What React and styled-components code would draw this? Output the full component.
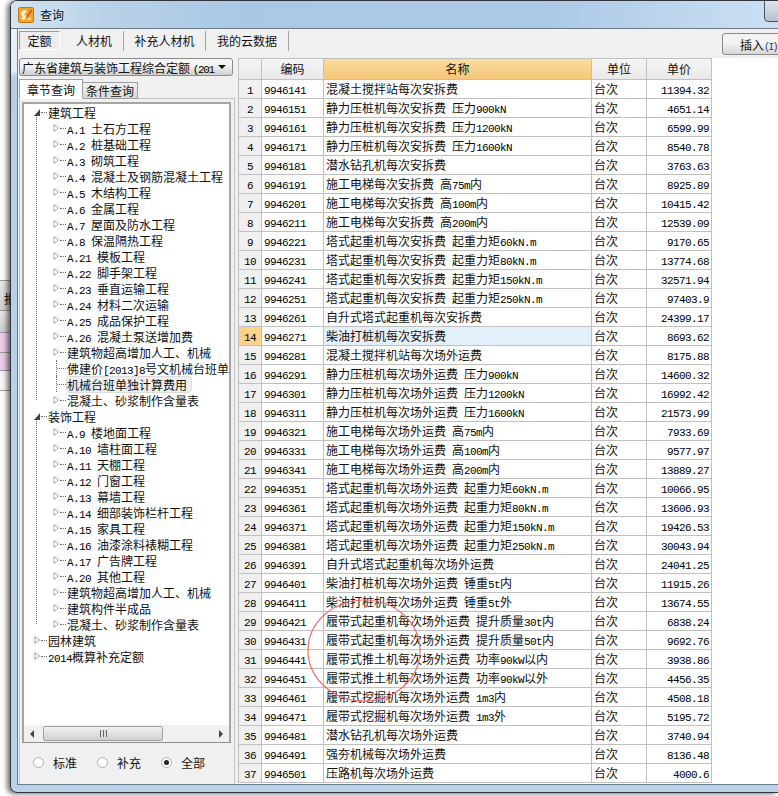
import React from 'react'
import styled, { createGlobalStyle } from 'styled-components'

const GlobalStyle = createGlobalStyle`
html, body {
  margin:0;
  padding:0;
  background:#fff;
}
body {
  font-family:"Noto Sans CJK SC","Liberation Sans",sans-serif;
  font-size:12px;
  color:#111;
}
`

const Page = styled.div`
display:flex;
align-items:flex-start;
width:778px;
height:796px;
overflow:hidden;
background:#fff;
`
const Backdrop = styled.div`
width:10px;
flex-shrink:0;
padding-top:280px;
overflow:hidden;
`
const BackdropRow = styled.div`
height:${p => p.$h}px;
box-sizing:border-box;
padding-left:4px;
background:${p => p.$bg};
border-top:${p => p.$first ? '1px solid #9a9a9a' : 'none'};
border-bottom:1px solid #9a9a9a;
font-size:12px;
line-height:${p => p.$h + 4}px;
white-space:nowrap;
`
const Window = styled.div`
flex:1;
min-width:0;
height:793px;
box-sizing:border-box;
display:flex;
flex-direction:column;
border:1px solid #30363c;
border-right:none;
border-radius:7px 0 0 7px;
background:linear-gradient(#eef4f9 0,#e3edf6 70px,#b4d0e8 76px,#b9d4ea);
box-shadow:-3px 1px 5px rgba(0,0,0,.55);
position:relative;
overflow:hidden;
`
const TitleBar = styled.div`
height:28px;
flex-shrink:0;
display:flex;
align-items:center;
padding-left:7px;
gap:6px;
box-sizing:border-box;
background:linear-gradient(90deg,#d3e3f1,#b9d2e8 12%,#a9c8e4 30%,#abc9e5 70%,#cbe0f3);
border-bottom:1px solid #6f7b86;
`
const TitleText = styled.span`
font-size:12px;
color:#05121f;
text-shadow:0 0 4px #e8f3fc;
`
const CloseStub = styled.div`
position:absolute;
top:-2px;
right:-12px;
width:24px;
height:21px;
border:1px solid #4a5560;
border-radius:0 0 4px 4px;
background:linear-gradient(#dfe7ee,#b4c2cf);
`
const WindowBody = styled.div`
flex:1;
min-height:0;
display:flex;
flex-direction:column;
margin-left:6px;
margin-bottom:7px;
border-left:1px solid #6f7b86;
border-bottom:1px solid #6f7b86;
background:#f0f0f0;
`
const Toolbar = styled.div`
height:29px;
flex-shrink:0;
display:flex;
align-items:flex-start;
padding-top:2px;
box-sizing:border-box;
`
const TabStrip = styled.div`
display:flex;
height:20px;
margin-left:1px;
`
const TopTab = styled.div`
display:flex;
align-items:center;
justify-content:center;
width:${p => p.$w}px;
padding-bottom:2px;
box-sizing:border-box;
border-right:1px solid #a6a6a6;
`
const ActiveTopTab = styled.div`
width:41px;
height:19px;
margin-right:5px;
padding-bottom:1px;
box-sizing:border-box;
display:flex;
align-items:center;
justify-content:center;
border:1px solid #9c9c9c;
border-right-color:#fff;
border-bottom-color:#fff;
background:repeating-conic-gradient(#f6f6f6 0 25%,#e4e4e4 0 50%) 0 0/2px 2px;
`
const InsertButton = styled.button`
margin-left:auto;
margin-right:-12px;
margin-top:2px;
width:68px;
height:22px;
padding:0 0 0 17px;
border:1px solid #8a8a8a;
border-radius:3px;
background:linear-gradient(#f3f3f3 45%,#d6d6d6);
font:12px "Noto Sans CJK SC",sans-serif;
color:#111;
text-align:left;
white-space:nowrap;
`
const Accel = styled.span`
color:#123f8f;
font-family:"Liberation Mono",monospace;
font-size:10px;
letter-spacing:-1.8px;
`
const Main = styled.div`
flex:1;
min-height:0;
display:flex;
`
const LeftPane = styled.div`
width:217px;
flex-shrink:0;
margin-right:3px;
display:flex;
flex-direction:column;
padding-left:1px;
box-sizing:border-box;
`
const Combo = styled.div`
width:214px;
height:18px;
box-sizing:border-box;
flex-shrink:0;
display:flex;
align-items:center;
justify-content:space-between;
padding:0 6px 0 2px;
border:1px solid #8c8c8c;
border-radius:3px;
background:linear-gradient(#f4f4f4 40%,#cfcfcf);
white-space:nowrap;
overflow:hidden;
`
const ComboLabel = styled.span`
width:194px;
overflow:hidden;
`
const ComboArrow = styled.i`
flex-shrink:0;
border-left:4px solid transparent;
border-right:4px solid transparent;
border-top:4px solid #111;
`
const PaneTabs = styled.div`
display:flex;
align-items:flex-end;
height:20px;
flex-shrink:0;
margin-top:3px;
position:relative;
z-index:1;
margin-bottom:-1px;
`
const PaneTab = styled.div`
height:${p => p.$active ? 20 : 17}px;
width:${p => p.$active ? 64 : 56}px;
box-sizing:border-box;
display:flex;
align-items:center;
justify-content:center;
margin-left:${p => p.$active ? 0 : -1}px;
border:1px solid #a0a0a0;
border-bottom:${p => p.$active ? '1px solid #fff' : '1px solid #a0a0a0'};
background:${p => p.$active ? '#fff' : 'linear-gradient(#f0f0f0,#d9d9d9)'};
position:relative;
z-index:${p => p.$active ? 1 : 0};
`
const PaneBox = styled.div`
flex:1;
min-height:0;
display:flex;
flex-direction:column;
width:216px;
box-sizing:border-box;
padding:3px 3px 0 2px;
border:1px solid #c4c4c4;
border-bottom:none;
`
const TreeBox = styled.div`
height:641px;
flex-shrink:0;
box-sizing:border-box;
display:flex;
flex-direction:column;
border:2px solid #a5a5a5;
border-bottom:1px solid #8f8f8f;
background:#fff;
`
const TreeScroll = styled.div`
flex:1;
min-height:0;
overflow:hidden;
`
const Group = styled.div`
position:relative;

&::before {
  content:'';
  position:absolute;
  left:${p => p.$left}px;
  top:-4px;
  bottom:8px;
  border-left:1px dotted #707070;
}
`
const NodeRow = styled.div`
display:flex;
align-items:center;
height:16px;
padding-left:${p => 9 + p.$level * 19}px;
white-space:pre;
position:relative;
z-index:1;
`
const Expander = styled.svg`
width:8px;
height:10px;
flex-shrink:0;
background:#fff;
`
const Dots = styled.i`
width:${p => p.$leaf ? 9 : 6}px;
flex-shrink:0;
margin-right:1px;
border-top:1px dotted #707070;
`
const LeafLead = styled.i`
width:5px;
height:16px;
flex-shrink:0;
box-sizing:border-box;
border-right:1px dotted #707070;
`
const NodeLabel = styled.span`
height:15px;
line-height:15px;
${p => p.$selected && `
  background:#eeeeee;
  outline:1px solid #dcdcdc;
  border-radius:3px;
  padding-right:4px;
`}
`
const HScroll = styled.div`
height:17px;
flex-shrink:0;
display:flex;
align-items:center;
padding:0 6px;
background:#f0f0f0;
`
const ThumbArrow = styled.i`
flex-shrink:0;
border-top:4px solid transparent;
border-bottom:4px solid transparent;
${p => p.$right ? 'border-left:4px solid #444;' : 'border-right:4px solid #444;'}
`
const Thumb = styled.div`
width:120px;
height:15px;
margin:0 auto 0 9px;
box-sizing:border-box;
display:flex;
align-items:center;
justify-content:center;
border:1px solid #a0a0a0;
border-radius:2px;
background:linear-gradient(#f1f1f1,#d0d0d0);
`
const Grip = styled.i`
width:7px;
height:7px;
background:repeating-linear-gradient(90deg,#666 0 1px,#ddd 1px 3px);
`
const RadioBar = styled.div`
flex:1;
display:flex;
align-items:center;
padding:0 0 3px 11px;
gap:18px;
`
const RadioItem = styled.label`
display:flex;
align-items:center;
gap:9px;
width:46px;
white-space:nowrap;
`
const RadioDot = styled.i`
width:9px;
height:9px;
flex-shrink:0;
display:flex;
align-items:center;
justify-content:center;
border:1px solid #b0b0b0;
border-radius:50%;
background:#fff;

&::after {
  content:'';
  width:5px;
  height:5px;
  border-radius:50%;
  background:${p => p.$checked ? '#222' : 'transparent'};
}
`
const TablePane = styled.div`
flex:1;
min-width:0;
background:#fff;
position:relative;
`
const Table = styled.div`
width:474px;
box-sizing:border-box;
border-left:1px solid #c0c0c0;
border-top:1px solid #c0c0c0;
`
const Row = styled.div`
display:grid;
grid-template-columns:23px 62px 268px 55px 65px;
height:19px;
`
const HeadRow = styled(Row)`
height:21px;
`
const Cell = styled.div`
box-sizing:border-box;
border-right:1px solid #c0c0c0;
border-bottom:1px solid #c0c0c0;
line-height:18px;
white-space:pre;
overflow:hidden;
padding:0 ${p => p.$align === 'right' ? 2 : 0}px 0 ${p => p.$align === 'left' ? 2 : 0}px;
text-align:${p => p.$align};
background:${p => p.$bg || 'transparent'};
`
const HeadCell = styled(Cell)`
text-align:center;
line-height:20px;
background:${p => p.$active ? 'linear-gradient(#fbdc9f,#f6c778)' : 'linear-gradient(#f5f5f5,#e9e9e9)'};
`
const Latin = styled.span`
font-family:"Liberation Mono",monospace;
font-size:11px;
letter-spacing:-0.6px;
color:#000;
`
const ComboLatin = styled(Latin)`
letter-spacing:-1.3px;
`
const Circle = styled.svg`
position:absolute;
left:69px;
top:541px;
width:116px;
height:104px;
overflow:visible;
pointer-events:none;
`

// digits and latin letters are half width in the original bitmap font
const Mixed = ({ text }) => (
  <>
    {text.split(/([\x20-\x7e]+)/).filter(Boolean).map((part, i) =>
      /^[\x20-\x7e]+$/.test(part) ? <Latin key={i}>{part}</Latin> : <span key={i}>{part}</span>
    )}
  </>
)

const ON = '每次安拆费'
const OFF = '每次场外运费'
const rows = [
  ['9946141', '混凝土搅拌站' + ON, '11394.32'],
  ['9946151', '静力压桩机' + ON + ' 压力900kN', '4651.14'],
  ['9946161', '静力压桩机' + ON + ' 压力1200kN', '6599.99'],
  ['9946171', '静力压桩机' + ON + ' 压力1600kN', '8540.78'],
  ['9946181', '潜水钻孔机' + ON, '3763.63'],
  ['9946191', '施工电梯' + ON + ' 高75m内', '8925.89'],
  ['9946201', '施工电梯' + ON + ' 高100m内', '10415.42'],
  ['9946211', '施工电梯' + ON + ' 高200m内', '12539.09'],
  ['9946221', '塔式起重机' + ON + ' 起重力矩60kN.m', '9170.65'],
  ['9946231', '塔式起重机' + ON + ' 起重力矩80kN.m', '13774.68'],
  ['9946241', '塔式起重机' + ON + ' 起重力矩150kN.m', '32571.94'],
  ['9946251', '塔式起重机' + ON + ' 起重力矩250kN.m', '97403.9'],
  ['9946261', '自升式塔式起重机' + ON, '24399.17'],
  ['9946271', '柴油打桩机' + ON, '8693.62'],
  ['9946281', '混凝土搅拌机站' + OFF, '8175.88'],
  ['9946291', '静力压桩机' + OFF + ' 压力900kN', '14600.32'],
  ['9946301', '静力压桩机' + OFF + ' 压力1200kN', '16992.42'],
  ['9946311', '静力压桩机' + OFF + ' 压力1600kN', '21573.99'],
  ['9946321', '施工电梯' + OFF + ' 高75m内', '7933.69'],
  ['9946331', '施工电梯' + OFF + ' 高100m内', '9577.97'],
  ['9946341', '施工电梯' + OFF + ' 高200m内', '13889.27'],
  ['9946351', '塔式起重机' + OFF + ' 起重力矩60kN.m', '10066.95'],
  ['9946361', '塔式起重机' + OFF + ' 起重力矩80kN.m', '13606.93'],
  ['9946371', '塔式起重机' + OFF + ' 起重力矩150kN.m', '19426.53'],
  ['9946381', '塔式起重机' + OFF + ' 起重力矩250kN.m', '30043.94'],
  ['9946391', '自升式塔式起重机' + OFF, '24041.25'],
  ['9946401', '柴油打桩机' + OFF + ' 锤重5t内', '11915.26'],
  ['9946411', '柴油打桩机' + OFF + ' 锤重5t外', '13674.55'],
  ['9946421', '履带式起重机' + OFF + ' 提升质量30t内', '6838.24'],
  ['9946431', '履带式起重机' + OFF + ' 提升质量50t内', '9692.76'],
  ['9946441', '履带式推土机' + OFF + ' 功率90kW以内', '3938.86'],
  ['9946451', '履带式推土机' + OFF + ' 功率90kW以外', '4456.35'],
  ['9946461', '履带式挖掘机' + OFF + ' 1m3内', '4508.18'],
  ['9946471', '履带式挖掘机' + OFF + ' 1m3外', '5195.72'],
  ['9946481', '潜水钻孔机' + OFF, '3740.94'],
  ['9946491', '强夯机械' + OFF, '8136.48'],
  ['9946501', '压路机' + OFF, '4000.6'],
]

const civil = [
  'A.1 土石方工程', 'A.2 桩基础工程', 'A.3 砌筑工程', 'A.4 混凝土及钢筋混凝土工程', 'A.5 木结构工程',
  'A.6 金属工程', 'A.7 屋面及防水工程', 'A.8 保温隔热工程', 'A.21 模板工程', 'A.22 脚手架工程',
  'A.23 垂直运输工程', 'A.24 材料二次运输', 'A.25 成品保护工程', 'A.26 混凝土泵送增加费', '建筑物超高增加人工、机械',
]

const decoration = [
  'A.9 楼地面工程', 'A.10 墙柱面工程', 'A.11 天棚工程', 'A.12 门窗工程', 'A.13 幕墙工程',
  'A.14 细部装饰栏杆工程', 'A.15 家具工程', 'A.16 油漆涂料裱糊工程', 'A.17 广告牌工程', 'A.20 其他工程',
  '建筑物超高增加人工、机械', '建筑构件半成品', '混凝土、砂浆制作含量表',
]

const GRAY = 'linear-gradient(#e6e6e6,#cdcdcd)'
const PINK = '#eccbe9'
const backdropRows = [
  { h: 31, bg: GRAY, text: '报', first: true },
  { h: 22, bg: GRAY },
  { h: 20, bg: PINK },
  { h: 18, bg: PINK },
  { h: 20, bg: '#f6f6f6' },
]

const Arrow = ({ open }) => (
  <Expander viewBox="0 0 8 10">
    {open
      ? <path d="M7 2v7H1z" fill="#444" />
      : <path d="M2 1.5v7l4.5-3.5z" fill="#fff" stroke="#a8a8a8" />}
  </Expander>
)

const Node = ({ level, label, open, leaf, selected }) => (
  <NodeRow $level={level}>
    {leaf ? <LeafLead /> : <Arrow open={open} />}
    <Dots $leaf={leaf} />
    <NodeLabel $selected={selected}><Mixed text={label} /></NodeLabel>
  </NodeRow>
)

const AppIcon = () => (
  <svg width="16" height="16" viewBox="0 0 16 16">
    <rect x="0.5" y="0.5" width="15" height="15" rx="1.5" fill="#f2a52c" stroke="#c9740f" />
    <path d="M3 5c2-2 5-2 6-1L6 8l3 1-3 4-3-1 2-3-2-1z" fill="#fff3dc" />
    <path d="M13 2 8 10l1 1 5-7z" fill="#d9531e" />
    <path d="M9 12l4-2v3H9z" fill="#f7d58a" />
  </svg>
)

const App = () => {
  return (
    <Page>
      <GlobalStyle />
      <Backdrop>
        {backdropRows.map((r, i) => (
          <BackdropRow key={i} $h={r.h} $bg={r.bg} $first={r.first}>{r.text}</BackdropRow>
        ))}
      </Backdrop>
      <Window>
        <TitleBar>
          <AppIcon />
          <TitleText>查询</TitleText>
        </TitleBar>
        <CloseStub />
        <WindowBody>
          <Toolbar>
            <TabStrip>
              <ActiveTopTab>定额</ActiveTopTab>
              <TopTab $w={59}>人材机</TopTab>
              <TopTab $w={82}>补充人材机</TopTab>
              <TopTab $w={83}>我的云数据</TopTab>
            </TabStrip>
            <InsertButton>插入<Accel>(I)</Accel></InsertButton>
          </Toolbar>
          <Main>
            <LeftPane>
              <Combo>
                <ComboLabel>广东省建筑与装饰工程综合定额 <ComboLatin>(201</ComboLatin></ComboLabel>
                <ComboArrow />
              </Combo>
              <PaneTabs>
                <PaneTab $active>章节查询</PaneTab>
                <PaneTab>条件查询</PaneTab>
              </PaneTabs>
              <PaneBox>
                <TreeBox>
                  <TreeScroll>
                    <Node level={0} label="建筑工程" open />
                    <Group $left={12}>
                      {civil.map(label => <Node key={label} level={1} label={label} />)}
                      <Node level={1} leaf label="佛建价[2013]8号文机械台班单" />
                      <Node level={1} leaf selected label="机械台班单独计算费用" />
                      <Node level={1} label="混凝土、砂浆制作含量表" />
                    </Group>
                    <Node level={0} label="装饰工程" open />
                    <Group $left={12}>
                      {decoration.map(label => <Node key={label} level={1} label={label} />)}
                    </Group>
                    <Node level={0} label="园林建筑" />
                    <Node level={0} label="2014概算补充定额" />
                  </TreeScroll>
                  <HScroll>
                    <ThumbArrow />
                    <Thumb><Grip /></Thumb>
                    <ThumbArrow $right />
                  </HScroll>
                </TreeBox>
                <RadioBar>
                  <RadioItem><RadioDot />标准</RadioItem>
                  <RadioItem><RadioDot />补充</RadioItem>
                  <RadioItem><RadioDot $checked />全部</RadioItem>
                </RadioBar>
              </PaneBox>
            </LeftPane>
            <TablePane>
              <Table>
                <HeadRow>
                  <HeadCell />
                  <HeadCell>编码</HeadCell>
                  <HeadCell $active>名称</HeadCell>
                  <HeadCell>单位</HeadCell>
                  <HeadCell>单价</HeadCell>
                </HeadRow>
                {rows.map(([code, name, price], i) => (
                  <Row key={code}>
                    <Cell $align="center" $bg={i === 13 ? '#fdd28a' : '#f0f0f0'}><Mixed text={String(i + 1)} /></Cell>
                    <Cell $align="left"><Mixed text={code} /></Cell>
                    <Cell $align="left" $bg={i === 13 ? '#e3f0fb' : undefined}><Mixed text={name} /></Cell>
                    <Cell $align="left">台次</Cell>
                    <Cell $align="right"><Mixed text={price} /></Cell>
                  </Row>
                ))}
              </Table>
              <Circle viewBox="0 0 116 104">
                <ellipse cx="57" cy="51.5" rx="56" ry="50.5" fill="none" stroke="#ee6f6f" strokeWidth="1.2" />
              </Circle>
            </TablePane>
          </Main>
        </WindowBody>
      </Window>
    </Page>
  )
}

export default App
